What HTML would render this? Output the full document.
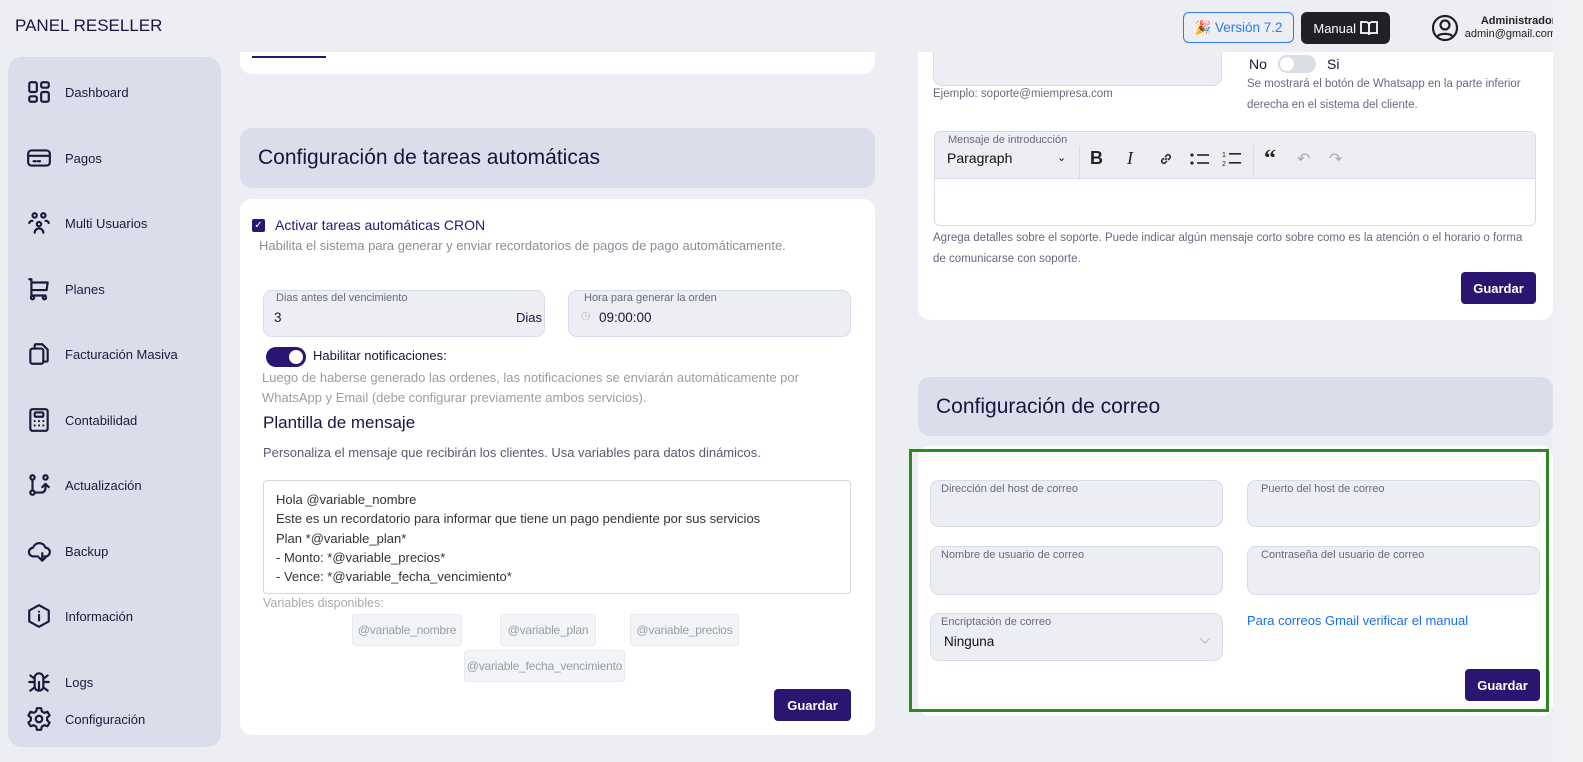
<!DOCTYPE html>
<html><head><meta charset="utf-8"><style>
*{box-sizing:border-box;margin:0;padding:0}
body{width:1583px;height:762px;overflow:hidden;background:#eceef4;font-family:"Liberation Sans",sans-serif;color:#1a1340;position:relative}
.abs{position:absolute}
.side{left:8px;top:57px;width:213px;height:690px;background:#dadeea;border-radius:14px}
.nav{position:absolute;left:26px;display:flex;align-items:center;font-size:13px;color:#1a1a3a}
.nav svg{width:26px;height:26px;margin-right:13px;fill:none;stroke:#1a1a3a;stroke-width:2;stroke-linecap:round;stroke-linejoin:round}
.card{background:#fff;border-radius:12px}
.hcard{background:#dadeea;border-radius:12px;font-size:21px;color:#1a1340;padding-left:18px;display:flex;align-items:center}
.fld{background:#eceef4;border:1px solid #d8dce8;border-radius:9px}
.lbl{font-size:11px;color:#666a80}
.muted{color:#8a8d98;font-size:12.5px}
.btn{background:#2a1570;color:#fff;font-size:13px;font-weight:bold;border-radius:4px;display:flex;align-items:center;justify-content:center}
.chip{position:absolute;background:#f3f4f7;border:1px solid #e8e9ee;border-radius:3px;color:#9a9ca8;font-size:12px;display:flex;align-items:center;justify-content:center;height:32px;letter-spacing:-0.2px}
</style></head><body>
<!-- left column -->
<div class="abs card" style="left:240px;top:30px;width:635px;height:44px"></div>
<div class="abs" style="left:252px;top:56px;width:74px;height:2px;background:#2a1570"></div>
<div class="abs hcard" style="left:240px;top:128px;width:635px;height:60px">Configuración de tareas automáticas</div>
<div class="abs card" style="left:240px;top:199px;width:635px;height:536px"></div>
<div class="abs" style="left:252px;top:219px;width:13px;height:13px;background:#2a1570;border-radius:2px;color:#fff;font-size:10px;line-height:13px;text-align:center">✓</div>
<div class="abs" style="left:275px;top:217px;font-size:14px;color:#2a1570">Activar tareas automáticas CRON</div>
<div class="abs muted" style="left:259px;top:238px;font-size:13px">Habilita el sistema para generar y enviar recordatorios de pagos de pago automáticamente.</div>
<div class="abs fld" style="left:263px;top:290px;width:282px;height:47px"></div>
<div class="abs lbl" style="left:276px;top:292px">Dias antes del vencimiento</div>
<div class="abs" style="left:274px;top:310px;font-size:13.5px">3</div>
<div class="abs" style="left:516px;top:310px;font-size:13px">Dias</div>
<div class="abs fld" style="left:568px;top:290px;width:283px;height:47px"></div>
<div class="abs lbl" style="left:584px;top:292px">Hora para generar la orden</div>
<div class="abs" style="left:581px;top:309px;font-size:11px;color:#bbb">◷</div>
<div class="abs" style="left:599px;top:310px;font-size:13.5px">09:00:00</div>
<div class="abs" style="left:266px;top:347px;width:40px;height:20px;background:#2a1570;border-radius:10px"><div style="position:absolute;right:3px;top:3px;width:14px;height:14px;background:#fff;border-radius:50%"></div></div>
<div class="abs" style="left:313px;top:348px;font-size:13px">Habilitar notificaciones:</div>
<div class="abs muted" style="left:262px;top:368px;font-size:13px;line-height:20px;color:#9a9ca6">Luego de haberse generado las ordenes, las notificaciones se enviarán automáticamente por<br>WhatsApp y Email (debe configurar previamente ambos servicios).</div>
<div class="abs" style="left:263px;top:413px;font-size:17px">Plantilla de mensaje</div>
<div class="abs" style="left:263px;top:445px;font-size:13px;color:#555a70">Personaliza el mensaje que recibirán los clientes. Usa variables para datos dinámicos.</div>
<div class="abs" style="left:263px;top:480px;width:588px;height:114px;border:1px solid #d4d6e0;border-radius:4px;padding:9px 0 0 12px;font-size:13px;line-height:19.3px;color:#333">Hola @variable_nombre<br>Este es un recordatorio para informar que tiene un pago pendiente por sus servicios<br>Plan *@variable_plan*<br>- Monto: *@variable_precios*<br>- Vence: *@variable_fecha_vencimiento*</div>
<div class="abs" style="left:263px;top:596px;font-size:12.5px;color:#aaa">Variables disponibles:</div>
<div class="chip" style="left:352px;top:614px;width:110px">@variable_nombre</div>
<div class="chip" style="left:500px;top:614px;width:96px">@variable_plan</div>
<div class="chip" style="left:630px;top:614px;width:109px">@variable_precios</div>
<div class="chip" style="left:464px;top:650px;width:161px">@variable_fecha_vencimiento</div>
<div class="abs btn" style="left:774px;top:689px;width:77px;height:32px">Guardar</div>

<!-- right column -->
<div class="abs card" style="left:918px;top:30px;width:635px;height:290px"></div>
<div class="abs fld" style="left:933px;top:30px;width:289px;height:56px"></div>
<div class="abs" style="left:933px;top:88px;font-size:11.5px;color:#666a80">Ejemplo: soporte@miempresa.com</div>
<div class="abs" style="left:1249px;top:56px;font-size:14px;color:#1a1340">No</div>
<div class="abs" style="left:1278px;top:55px;width:38px;height:18px;background:#dadde4;border-radius:9px"><div style="position:absolute;left:2px;top:2px;width:14px;height:14px;background:#fff;border-radius:50%"></div></div>
<div class="abs" style="left:1327px;top:56px;font-size:14px">Si</div>
<div class="abs" style="left:1247px;top:74px;font-size:11.5px;line-height:21px;color:#666a80">Se mostrará el botón de Whatsapp en la parte inferior<br>derecha en el sistema del cliente.</div>
<div class="abs" style="left:934px;top:131px;width:602px;height:95px;border:1px solid #d8dce8;border-radius:6px;overflow:hidden">
 <div style="height:47px;background:#eceef4;border-bottom:1px solid #d8dce8;position:relative">
  <div style="position:absolute;left:13px;top:2px;font-size:11px;color:#666a80">Mensaje de introducción</div>
  <div style="position:absolute;left:12px;top:18px;font-size:14px;color:#111">Paragraph</div>
  <div style="position:absolute;left:122px;top:19px;font-size:11px;color:#111">⌄</div>
  <div style="position:absolute;left:144px;top:14px;width:1px;height:32px;background:#d8dce8"></div>
  <div style="position:absolute;left:155px;top:16px;font-size:18px;font-weight:bold;color:#222">B</div>
  <div style="position:absolute;left:192px;top:16px;font-size:18px;font-style:italic;font-family:'Liberation Serif',serif;color:#222">I</div>
  <svg style="position:absolute;left:223px;top:19px" width="16" height="16" viewBox="0 0 16 16" fill="none" stroke="#222" stroke-width="1.5"><path d="M7 9l2-2M6 7L4 9a2.2 2.2 0 0 0 3 3l2-2M10 9l2-2a2.2 2.2 0 0 0-3-3L7 6"/></svg>
  <svg style="position:absolute;left:255px;top:20px" width="20" height="14" viewBox="0 0 20 14" fill="#222"><circle cx="2" cy="3" r="1.6"/><circle cx="2" cy="11" r="1.6"/><rect x="7" y="2.2" width="12" height="1.6"/><rect x="7" y="10.2" width="12" height="1.6"/></svg>
  <svg style="position:absolute;left:287px;top:18px" width="20" height="17" viewBox="0 0 20 17" fill="#222"><text x="0" y="7" font-size="7" font-family="Liberation Sans">1</text><text x="0" y="16" font-size="7" font-family="Liberation Sans">2</text><rect x="7" y="3" width="12" height="1.6"/><rect x="7" y="12" width="12" height="1.6"/></svg>
  <div style="position:absolute;left:318px;top:14px;width:1px;height:32px;background:#d8dce8"></div>
  <div style="position:absolute;left:329px;top:14px;font-size:24px;font-weight:bold;color:#222;font-family:'Liberation Serif',serif">“</div>
  <div style="position:absolute;left:362px;top:17px;font-size:16px;color:#aaa">↶</div>
  <div style="position:absolute;left:394px;top:17px;font-size:16px;color:#aaa">↷</div>
 </div>
</div>
<div class="abs" style="left:933px;top:228px;font-size:11.5px;line-height:21px;color:#666a80">Agrega detalles sobre el soporte. Puede indicar algún mensaje corto sobre como es la atención o el horario o forma<br>de comunicarse con soporte.</div>
<div class="abs btn" style="left:1461px;top:272px;width:75px;height:32px">Guardar</div>

<div class="abs hcard" style="left:918px;top:377px;width:635px;height:59px">Configuración de correo</div>
<div class="abs card" style="left:918px;top:446px;width:635px;height:270px"></div>
<div class="abs" style="left:909px;top:449px;width:640px;height:263px;border:3px solid #2a8a1f"></div>
<div class="abs fld" style="left:930px;top:480px;width:293px;height:47px"></div>
<div class="abs lbl" style="left:941px;top:483px">Dirección del host de correo</div>
<div class="abs fld" style="left:1247px;top:480px;width:293px;height:47px"></div>
<div class="abs lbl" style="left:1261px;top:483px">Puerto del host de correo</div>
<div class="abs fld" style="left:930px;top:546px;width:293px;height:49px"></div>
<div class="abs lbl" style="left:941px;top:549px">Nombre de usuario de correo</div>
<div class="abs fld" style="left:1247px;top:546px;width:293px;height:49px"></div>
<div class="abs lbl" style="left:1261px;top:549px">Contraseña del usuario de correo</div>
<div class="abs fld" style="left:930px;top:613px;width:293px;height:48px"></div>
<div class="abs lbl" style="left:941px;top:616px">Encriptación de correo</div>
<div class="abs" style="left:944px;top:634px;font-size:13.5px;color:#111">Ninguna</div>
<svg class="abs" style="left:1199px;top:637px" width="12" height="8" viewBox="0 0 12 8" fill="none" stroke="#bbb" stroke-width="1.2"><path d="M1 1l5 5 5-5"/></svg>
<div class="abs" style="left:1247px;top:613px;font-size:13px;color:#1a6ef5">Para correos Gmail verificar el manual</div>
<div class="abs btn" style="left:1465px;top:669px;width:75px;height:32px">Guardar</div>

<!-- header (on top) -->
<div class="abs" style="left:0;top:0;width:1583px;height:52px;background:#eceef4"></div>
<div class="abs" style="left:15px;top:16px;font-size:17px;color:#1a1340">PANEL RESELLER</div>
<div class="abs" style="left:1183px;top:12px;width:111px;height:31px;border:1px solid #2f7bf0;border-radius:6px;color:#2f7bf0;font-size:13.5px;display:flex;align-items:center;justify-content:center">🎉&nbsp;Versión 7.2</div>
<div class="abs" style="left:1301px;top:12px;width:89px;height:32px;background:#202124;border-radius:6px;color:#fff;font-size:13px;display:flex;align-items:center;justify-content:center">Manual&nbsp;<svg width="18" height="16" viewBox="0 0 18 16" fill="none" stroke="#fff" stroke-width="1.8"><path d="M1 2h5a3 3 0 0 1 3 3v10a2 2 0 0 0-2-2H1zM17 2h-5a3 3 0 0 0-3 3v10a2 2 0 0 1 2-2h6z"/></svg></div>
<svg class="abs" style="left:1431px;top:14px" width="28" height="28" viewBox="0 0 28 28" fill="none" stroke="#222" stroke-width="2.2"><circle cx="14" cy="14" r="12"/><circle cx="14" cy="11" r="4.5"/><path d="M6.5 22.5c2-3.5 13-3.5 15 0"/></svg>
<div class="abs" style="left:1456px;top:15px;width:100px;text-align:right;font-size:11px;color:#222;line-height:13px"><b>Administrador</b><br>admin@gmail.com</div>
<div class="abs" style="left:1553px;top:0;width:30px;height:762px;background:#f1f1f3"></div>

<div class="abs side"></div>
<div class="nav" style="top:79px"><svg viewBox="0 0 24 24"><rect x="3" y="3" width="7" height="9" rx="1.5"/><rect x="14" y="3" width="7" height="5" rx="1.5"/><rect x="3" y="16" width="7" height="5" rx="1.5"/><rect x="14" y="12" width="7" height="9" rx="1.5"/></svg>Dashboard</div>
<div class="nav" style="top:145px"><svg viewBox="0 0 24 24"><rect x="2" y="5" width="20" height="14" rx="3"/><path d="M2 10h20M7 15h2M11 15h2"/></svg>Pagos</div>
<div class="nav" style="top:210px"><svg viewBox="0 0 24 24"><circle cx="8" cy="5" r="2"/><circle cx="16" cy="5" r="2"/><circle cx="12" cy="13" r="2"/><path d="M3 12a3 3 0 0 1 3-2M21 12a3 3 0 0 0-3-2M8 21a4 4 0 0 1 8 0"/></svg>Multi Usuarios</div>
<div class="nav" style="top:276px"><svg viewBox="0 0 24 24"><path d="M3 3h2v15h13M5 6h15l-1 7H5"/><circle cx="6" cy="20" r="1.5"/><circle cx="17" cy="20" r="1.5"/></svg>Planes</div>
<div class="nav" style="top:341px"><svg viewBox="0 0 24 24"><path d="M8 7V4a1 1 0 0 1 1-1h6l5 5v10a1 1 0 0 1-1 1h-3"/><rect x="4" y="7" width="12" height="14" rx="2"/></svg>Facturación Masiva</div>
<div class="nav" style="top:407px"><svg viewBox="0 0 24 24"><rect x="4" y="2" width="16" height="20" rx="2"/><rect x="8" y="5" width="8" height="4" rx="1"/><path d="M8 13h.01M12 13h.01M16 13h.01M8 17h.01M12 17h.01M16 17h.01"/></svg>Contabilidad</div>
<div class="nav" style="top:472px"><svg viewBox="0 0 24 24"><circle cx="6" cy="5" r="2"/><circle cx="6" cy="19" r="2"/><circle cx="18" cy="5" r="2"/><path d="M6 7v10M8 19h6a4 4 0 0 0 4-4v-3M15 14l3-3 3 3"/></svg>Actualización</div>
<div class="nav" style="top:538px"><svg viewBox="0 0 24 24"><path d="M17 17h1a4 4 0 0 0 0-8 6 6 0 0 0-11.5 0A4 4 0 0 0 7 17h4M15 14v7M12 18l3 3 3-3"/></svg>Backup</div>
<div class="nav" style="top:603px"><svg viewBox="0 0 24 24"><path d="M12 2l9 5v10l-9 5-9-5V7z"/><path d="M12 11v5M12 8h.01"/></svg>Información</div>
<div class="nav" style="top:669px"><svg viewBox="0 0 24 24"><path d="M8 8a4 4 0 0 1 8 0v8a4 4 0 0 1-8 0zM12 12v8M3 12h5M16 12h5M4 6l4 3M20 6l-4 3M4 20l4-3M20 20l-4-3"/></svg>Logs</div>
<div class="nav" style="top:706px"><svg viewBox="0 0 24 24"><circle cx="12" cy="12" r="3"/><path d="M10 2h4l.6 3 2.3 1.3 2.9-1 2 3.4-2.3 2v2.6l2.3 2-2 3.4-2.9-1-2.3 1.3L14 22h-4l-.6-3-2.3-1.3-2.9 1-2-3.4 2.3-2v-2.6l-2.3-2 2-3.4 2.9 1L9.4 5z"/></svg>Configuración</div>
</body></html>
